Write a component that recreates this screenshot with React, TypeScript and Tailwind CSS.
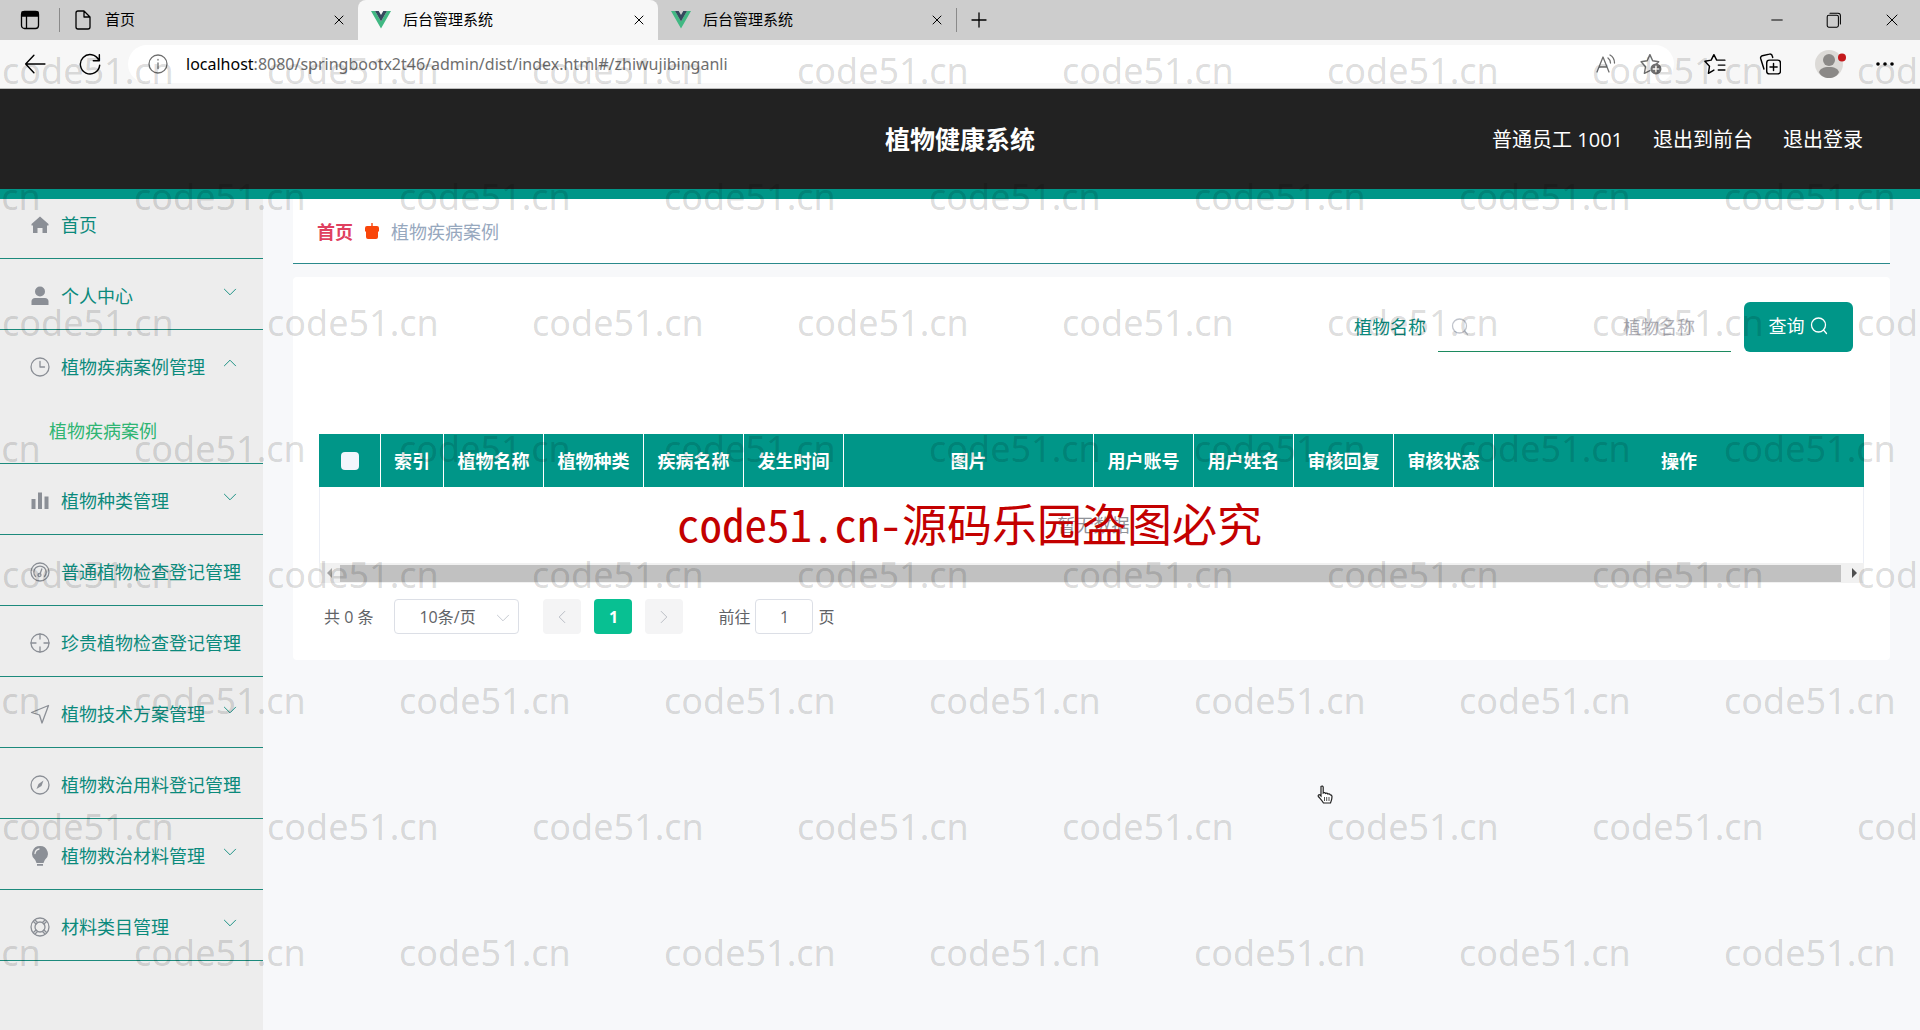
import type { ReactNode } from 'react';
import { Minus, Plus, X } from 'lucide-react';

const WATERMARK = 'code51.cn';

type IconProps = { className?: string };

function LineIcon({ className = 'size-5', children }: IconProps & { children: ReactNode }) {
  return (
    <svg
      viewBox="0 0 20 20"
      className={className}
      fill="none"
      stroke="currentColor"
      strokeWidth="1.3"
      strokeLinecap="round"
      strokeLinejoin="round"
      aria-hidden="true"
    >
      {children}
    </svg>
  );
}

const VueLogo = () => (
  <svg viewBox="0 0 20 18" className="h-[18px] w-5" aria-hidden="true">
    <path d="M0 0h4l6 10.4L16 0h4L10 17.5z" fill="#41b883" />
    <path d="M4 0h3.7L10 4l2.3-4H16l-6 10.4z" fill="#35495e" />
  </svg>
);

const Magnifier = ({ className }: IconProps) => (
  <LineIcon className={className}>
    <circle cx="9.5" cy="9" r="7" />
    <path d="M14.5 14l3 3.500" />
  </LineIcon>
);

const Chevron = ({ className }: IconProps) => (
  <LineIcon className={className}>
    <path d="M2 6l8 8 8-8" />
  </LineIcon>
);

const menuIcons = {
  home: (
    <LineIcon>
      <path
        d="M10 1.500L1.500 9v1.500H3V18h4.500v-5h5v5H17v-7.500h1.500V9z"
        fill="currentColor"
        stroke="none"
      />
    </LineIcon>
  ),
  user: (
    <LineIcon>
      <g fill="currentColor" stroke="none">
        <circle cx="10" cy="5.500" r="5" />
        <path d="M1.500 19v-3.500c0-2 1.500-3.500 3.500-3.500h10c2 0 3.500 1.500 3.500 3.500V19z" />
      </g>
    </LineIcon>
  ),
  clock: (
    <LineIcon>
      <circle cx="10" cy="10" r="9" />
      <path d="M10 4.500V10h4.500" />
    </LineIcon>
  ),
  bars: (
    <LineIcon>
      <path d="M1.500 8h4v10h-4zM8 1.500h4V18H8zM14.500 5.500h4V18h-4z" fill="currentColor" stroke="none" />
    </LineIcon>
  ),
  gauge: (
    <LineIcon>
      <circle cx="10" cy="10" r="9" />
      <path d="M5.500 14.500a6.200 6.200 0 1 1 9 0M10 12l1.800-5" />
      <circle cx="9.500" cy="13" r="1.500" />
    </LineIcon>
  ),
  aim: (
    <LineIcon>
      <circle cx="10" cy="10" r="9" />
      <path d="M10 1v5M10 14v5M1 10h5M14 10h5" />
    </LineIcon>
  ),
  position: (
    <LineIcon>
      <path d="M18.500 1.500L1.500 8.500l8 2.500 2.500 8z" />
    </LineIcon>
  ),
  compass: (
    <LineIcon>
      <circle cx="10" cy="10" r="9" />
      <path d="M13.500 5.500l-5 3.500-2 5 5-3z" fill="currentColor" stroke="none" />
    </LineIcon>
  ),
  bulb: (
    <LineIcon>
      <path
        d="M10 0a7.800 7.800 0 0 0-4.800 14l1.300 3h7l1.300-3A7.800 7.800 0 0 0 10 0zM7 18h6v1.800H7z"
        fill="currentColor"
        stroke="none"
      />
      <path d="M5 7.500C5.300 5 6.800 3.500 9 3" stroke="#ededed" />
    </LineIcon>
  ),
  help: (
    <LineIcon>
      <circle cx="10" cy="10" r="9" />
      <circle cx="10" cy="10" r="5" />
      <path d="M3.500 4.500l2.500 2.500M5 3l2.500 2.500M15 3l-2.500 2.500M16.500 4.500L14 7M3.500 15.500L6 13M5 17l2.500-2.500M15 17l-2.500-2.500M16.500 15.500L14 13" />
    </LineIcon>
  ),
};

type MenuItem = {
  icon: keyof typeof menuIcons;
  label: string;
  children?: string[];
  leaf?: boolean;
};

const MENU: MenuItem[] = [
  { icon: 'home', label: '首页', leaf: true },
  { icon: 'user', label: '个人中心' },
  { icon: 'clock', label: '植物疾病案例管理', children: ['植物疾病案例'] },
  { icon: 'bars', label: '植物种类管理' },
  { icon: 'gauge', label: '普通植物检查登记管理' },
  { icon: 'aim', label: '珍贵植物检查登记管理' },
  { icon: 'position', label: '植物技术方案管理' },
  { icon: 'compass', label: '植物救治用料登记管理' },
  { icon: 'bulb', label: '植物救治材料管理' },
  { icon: 'help', label: '材料类目管理' },
];

const COLUMNS = [
  { label: '索引', width: 'w-[63px]' },
  { label: '植物名称', width: 'w-[100px]' },
  { label: '植物种类', width: 'w-[100px]' },
  { label: '疾病名称', width: 'w-[100px]' },
  { label: '发生时间', width: 'w-[100px]' },
  { label: '图片', width: 'w-[250px]' },
  { label: '用户账号', width: 'w-[100px]' },
  { label: '用户姓名', width: 'w-[100px]' },
  { label: '审核回复', width: 'w-[100px]' },
  { label: '审核状态', width: 'w-[100px]' },
  { label: '操作', width: 'w-auto' },
];

function BrowserTab({ icon, title, active }: { icon: ReactNode; title: string; active?: boolean }) {
  return (
    <div
      className={
        active
          ? 'flex w-[300px] items-center rounded-t-lg bg-[#f7f7f7] pr-[11px] pl-[13px]'
          : 'flex w-[298px] items-center pr-[11px] pl-[13px]'
      }
    >
      {icon}
      <span className="ml-3 flex-1 pb-px text-[15px]">{title}</span>
      <button type="button" aria-label="关闭标签页">
        <X className="size-4" strokeWidth={1.500} />
      </button>
    </div>
  );
}

function BrowserChrome() {
  return (
    <div className="border-b border-[#bdbdbd] text-black">
      <div className="flex h-10 items-stretch bg-[#cdcdcd]">
        <div className="my-2 flex w-[60px] items-center justify-center border-r border-[#8a8a8a]">
          <LineIcon>
            <rect x="1.500" y="1.500" width="17" height="17" rx="3" />
            <path d="M2 2h16v4H2z" fill="currentColor" />
            <path d="M6.500 6v12" />
          </LineIcon>
        </div>
        <BrowserTab
          title="首页"
          icon={
            <LineIcon>
              <path d="M3 3a2 2 0 0 1 2-2h6l6 6v10a2 2 0 0 1-2 2H5a2 2 0 0 1-2-2zM11 1v6h6" />
            </LineIcon>
          }
        />
        <BrowserTab title="后台管理系统" icon={<VueLogo />} active />
        <BrowserTab title="后台管理系统" icon={<VueLogo />} />
        <button type="button" aria-label="新建标签页" className="my-2 border-l border-[#8a8a8a] px-[10px]">
          <Plus className="size-6" strokeWidth={1.300} />
        </button>
        <div className="flex flex-1 items-center justify-end gap-10 pr-[18px]">
          <button type="button" aria-label="最小化">
            <Minus className="size-[18px]" strokeWidth={1.300} />
          </button>
          <button type="button" aria-label="还原">
            <LineIcon className="size-4">
              <rect x="1.500" y="4" width="14" height="15" rx="2" />
              <path d="M5 1.500h10a3 3 0 0 1 3 3V15" />
            </LineIcon>
          </button>
          <button type="button" aria-label="关闭">
            <X className="size-5" strokeWidth={1.200} />
          </button>
        </div>
      </div>
      <div className="flex h-12 items-center bg-[#f7f7f7] pr-[25px] pl-6">
        <button type="button" aria-label="后退">
          <LineIcon className="size-[22px]">
            <path d="M19 10H1.500M9 2L1.500 10 9 18" />
          </LineIcon>
        </button>
        <button type="button" aria-label="刷新" className="ml-[33px]">
          <LineIcon className="size-[22px]">
            <path d="M18 6.500A8.800 8.800 0 1 0 18.800 11M18.500 1.500v5.500H13" />
          </LineIcon>
        </button>
        <div className="ml-[27px] flex h-[38px] flex-1 items-center rounded-full bg-white pr-3 pl-5 text-[#6f6f6f]">
          <LineIcon>
            <circle cx="10" cy="10" r="9" />
            <path d="M10 9v5.500M10 5.500v.5" />
          </LineIcon>
          <p className="ml-[18px] flex-1 font-['Noto_Sans'] text-base">
            <span className="text-black">localhost</span>
            :8080/springbootx2t46/admin/dist/index.html#/zhiwujibinganli
          </p>
          <button type="button" aria-label="大声朗读">
            <LineIcon>
              <path d="M1 18L7 3l6 15M3 13h8M12 4c2 1.500 2.500 3 2.500 5M14 1c3.500 2 4.500 5 4.500 8" />
            </LineIcon>
          </button>
          <button type="button" aria-label="添加到收藏夹" className="ml-6">
            <LineIcon className="size-[22px]">
              <path d="M9 16l-5 2.500 1-6L1 8l5.500-1L9 1.500 11.500 7 17 8l-2.500 2.500" />
              <circle cx="14.500" cy="14.500" r="5" fill="currentColor" stroke="none" />
              <path d="M14.500 12v5M12 14.500h5" stroke="#fff" />
            </LineIcon>
          </button>
        </div>
        <div className="ml-[30px] flex items-center gap-[33px]">
          <button type="button" aria-label="收藏夹">
            <LineIcon className="size-[22px]">
              <path d="M9 15.500l-5 3 1-6.500L.800 7.500l5.700-1L9 1.500l2.500 5h7.500M13 11h6M13 15.500h6" />
            </LineIcon>
          </button>
          <button type="button" aria-label="集锦">
            <LineIcon className="size-[22px]">
              <path d="M4.500 14.500L1.500 5A2 2 0 0 1 3 2.500L9.500 1A2 2 0 0 1 12 2.500l.5 1.500" />
              <rect x="7" y="6.500" width="12.500" height="12.500" rx="2.500" />
              <path d="M13.200 9.500v6.500M10 12.800h6.500" />
            </LineIcon>
          </button>
          <button type="button" aria-label="个人资料" className="-mr-1">
            <svg viewBox="0 0 32 28" className="h-7 w-8" aria-hidden="true">
              <circle cx="15" cy="14" r="14" fill="#dcdad7" />
              <circle cx="15" cy="10" r="6" fill="#8b8987" />
              <path d="M5 22c1-3 4-5 10-5s9 2 10 5c-3 8-17 8-20 0z" fill="#8b8987" />
              <circle cx="28" cy="7.500" r="4" fill="#c4191c" />
            </svg>
          </button>
          <button type="button" aria-label="更多">
            <LineIcon>
              <g fill="currentColor" stroke="none">
                <circle cx="3" cy="10" r="1.800" />
                <circle cx="10" cy="10" r="1.800" />
                <circle cx="17" cy="10" r="1.800" />
              </g>
            </LineIcon>
          </button>
        </div>
      </div>
    </div>
  );
}

function Header() {
  return (
    <header className="grid h-[110px] grid-cols-[1fr_auto_1fr] items-center border-b-[10px] border-[#009688] bg-[#222222] pt-[2px] text-white">
      <h1 className="col-start-2 text-[25px] font-bold">植物健康系统</h1>
      <nav className="flex justify-end gap-[30px] pr-[57px] text-xl">
        <span>普通员工 1001</span>
        <a href="#front">退出到前台</a>
        <a href="#logout">退出登录</a>
      </nav>
    </header>
  );
}

function Sidebar() {
  return (
    <aside className="w-[263px] shrink-0 bg-[#ededed]">
      <ul className="text-lg text-[#0b8a7c]">
        {MENU.map((item) => (
          <li key={item.label} className="border-b border-[#1c8a7c]">
            <a
              href="#menu"
              className={
                item.leaf
                  ? 'flex h-[59px] items-center gap-[11px] pb-2 pl-[30px]'
                  : 'relative flex h-[70px] items-center gap-[11px] pt-[3px] pl-[30px]'
              }
            >
              <span className="text-[#8b8f96]">{menuIcons[item.icon]}</span>
              <span className="whitespace-nowrap">{item.label}</span>
              {!item.leaf && (
                <Chevron
                  className={
                    item.children
                      ? 'absolute top-[26px] right-[26px] size-[14px] rotate-180'
                      : 'absolute top-[26px] right-[26px] size-[14px]'
                  }
                />
              )}
            </a>
            {item.children?.map((child) => (
              <a key={child} href="#child" className="flex h-[63px] items-center pb-px pl-[49px] text-[#2fb573]">
                {child}
              </a>
            ))}
          </li>
        ))}
      </ul>
    </aside>
  );
}

function Breadcrumb() {
  return (
    <nav className="flex h-[65px] items-center border-b border-[#2a8a8c] bg-white pt-[2px] pl-6 text-lg">
      <a href="#home" className="font-bold text-[#e0405f]">
        首页
      </a>
      <svg viewBox="0 0 14 18" className="mx-3 h-[18px] w-[14px]" aria-hidden="true">
        <path d="M6.300 0h1.400v3H12a2 2 0 0 1 2 2v3l-1 1v5a2 2 0 0 1-2 2H3a2 2 0 0 1-2-2V9L0 8V5a2 2 0 0 1 2-2h4.300z" fill="#f9460b" />
      </svg>
      <span className="text-[#97a8be]">植物疾病案例</span>
    </nav>
  );
}

function SearchForm() {
  return (
    <form className="flex items-center justify-end pr-[11px] text-lg" onSubmit={(e) => e.preventDefault()}>
      <label htmlFor="plant-name" className="text-[#0b8a7c]">
        植物名称
      </label>
      <div className="ml-3 flex h-[50px] w-[293px] items-center border-b border-[#1c8a5f] pr-9 pl-3">
        <Magnifier className="size-5 text-[#c0c4cc]" />
        <input
          id="plant-name"
          placeholder="植物名称"
          className="min-w-0 flex-1 bg-transparent text-right outline-none placeholder:text-[#b4b4bc]"
        />
      </div>
      <button
        type="submit"
        className="ml-[13px] flex h-[50px] w-[109px] items-center justify-center gap-1 rounded-md bg-[#009688] pb-[3px] text-white"
      >
        查询
        <Magnifier className="size-5" />
      </button>
    </form>
  );
}

function CaseTable() {
  return (
    <div className="mt-[82px]">
      <table className="w-full table-fixed border-separate border-spacing-0 text-lg">
        <thead>
          <tr className="h-[53px] bg-[#009688] text-white">
            <th className="w-[62px] border-r border-white">
              <input
                type="checkbox"
                aria-label="全选"
                className="mx-auto block size-[18px] appearance-none rounded-sm bg-[#f2f6fc]"
              />
            </th>
            {COLUMNS.map((col) => (
              <th
                key={col.label}
                className={`${col.width} border-r border-white font-bold whitespace-nowrap last:border-r-0`}
              >
                {col.label}
              </th>
            ))}
          </tr>
        </thead>
        <tbody>
          <tr className="h-[76px]">
            <td colSpan={12} className="border-x border-[#ebeef5] pl-1 text-center text-[#909399]">
              暂无数据
            </td>
          </tr>
        </tbody>
      </table>
      <div className="flex h-5 items-center bg-[#f1f1f1]">
        <svg viewBox="0 0 21 20" className="h-5 w-[21px] text-[#a3a3a3]" aria-hidden="true">
          <path d="M13 5v10l-5-5z" fill="currentColor" />
        </svg>
        <div className="h-[17px] flex-1 bg-[#c1c1c1]" />
        <svg viewBox="0 0 23 20" className="h-5 w-[23px] text-[#505050]" aria-hidden="true">
          <path d="M11 5v10l5-5z" fill="currentColor" />
        </svg>
      </div>
    </div>
  );
}

function Pagination() {
  return (
    <div className="mt-4 flex h-[35px] items-center pl-[5px] text-base text-[#606266]">
      <span>共 0 条</span>
      <div className="relative ml-[21px]">
        <select
          aria-label="每页条数"
          className="h-[35px] w-[125px] appearance-none rounded-sm border border-[#dcdfe6] bg-white pl-6"
        >
          <option>10条/页</option>
        </select>
        <Chevron className="pointer-events-none absolute top-3 right-[9px] size-[14px] text-[#c0c4cc]" />
      </div>
      <div className="ml-6 flex gap-[13px]">
        <button
          type="button"
          aria-label="上一页"
          className="flex h-[35px] w-[38px] items-center justify-center rounded-sm bg-[#f4f4f5] text-[#b4b8c0]"
        >
          <Chevron className="size-[14px] rotate-90" />
        </button>
        <button type="button" className="h-[35px] w-[38px] rounded-sm bg-[#08c092] font-bold text-white">
          1
        </button>
        <button
          type="button"
          aria-label="下一页"
          className="flex h-[35px] w-[38px] items-center justify-center rounded-sm bg-[#f4f4f5] text-[#b4b8c0]"
        >
          <Chevron className="size-[14px] -rotate-90" />
        </button>
      </div>
      <label htmlFor="jump-page" className="ml-[35px]">
        前往
      </label>
      <input
        id="jump-page"
        defaultValue="1"
        className="mx-[5px] h-[35px] w-[58px] rounded-sm border border-[#dcdfe6] text-center"
      />
      <span>页</span>
    </div>
  );
}

function Watermark() {
  return (
    <div
      className="pointer-events-none absolute inset-0 overflow-hidden pt-2 pl-[2px] font-['Noto_Sans'] text-4xl text-black/15"
      aria-hidden="true"
    >
      {Array.from({ length: 8 }, (_, row) => (
        <div key={row} className={row % 2 ? '-ml-[133px] flex h-[126px] items-center' : 'flex h-[126px] items-center'}>
          {Array.from({ length: 8 }, (_, col) => (
            <span key={col} className="w-[265px] shrink-0">
              {WATERMARK}
            </span>
          ))}
        </div>
      ))}
    </div>
  );
}

export default function App() {
  return (
    <div className="relative flex min-h-screen flex-col overflow-hidden bg-[#f7f8fa] font-['Open_Sans','Noto_Sans_CJK_SC',sans-serif]">
      <BrowserChrome />
      <Header />
      <div className="flex flex-1">
        <Sidebar />
        <main className="min-w-0 flex-1 px-[30px]">
          <Breadcrumb />
          <section className="mt-[13px] rounded bg-white px-[26px] pt-[25px] pb-[26px]">
            <SearchForm />
            <CaseTable />
            <Pagination />
          </section>
        </main>
      </div>
      <Watermark />
      <p className="pointer-events-none absolute top-[490px] left-[677px] font-['Noto_Sans_CJK_SC',sans-serif] text-[45px] leading-[66px] whitespace-nowrap text-[#c30000] [font-feature-settings:'hwid']">
        code51.cn-源码乐园盗图必究
      </p>
      <svg viewBox="0 0 16 20" className="absolute top-[785px] left-[1317px] h-5 w-4" aria-hidden="true">
        <path
          d="M4 1.500c1-1 2.200-.3 2.200.8V8c1-.8 2-.5 2.300.4 1-.6 2-.3 2.300.6 1-.4 2-.1 2.500.8 1 0 1.700.6 1.700 1.700 0 3-.8 4-1.500 6.500H6.500C5 15.500 3 13.500 1.300 11.500.700 10 2 9.300 3 10l1 1z"
          fill="#fff"
          stroke="#222"
          strokeWidth="1.200"
        />
        <path d="M7.500 12v4M9.700 12v4M12 12v4" stroke="#222" strokeWidth=".8" />
      </svg>
    </div>
  );
}
